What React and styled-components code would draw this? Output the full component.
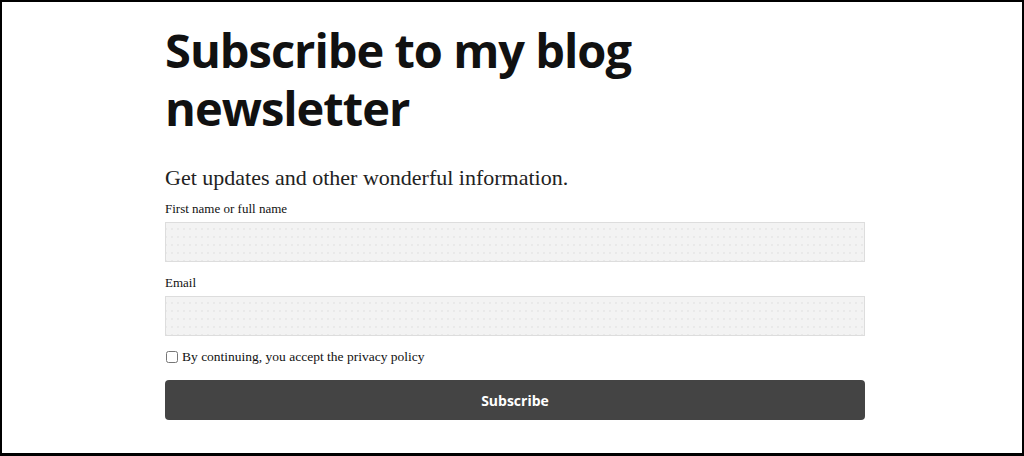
import React from 'react';
import styled, { createGlobalStyle } from 'styled-components';

const GlobalStyle = createGlobalStyle`
  * {
    margin: 0;
    padding: 0;
    box-sizing: border-box;
  }

  html, body {
    background: #fff;
    width: 1024px;
    height: 456px;
    overflow: hidden;
  }
`;

const Frame = styled.div`
  width: 1024px;
  height: 456px;
  border: 2px solid #000;
  border-bottom-width: 3px;
  background: #fff;
  padding: 19px 0 0 163px;
`;

const Form = styled.form`
  width: 700px;
  display: flex;
  flex-direction: column;
`;

const Title = styled.h1`
  font-family: 'Open Sans', 'Noto Sans', sans-serif;
  font-weight: 700;
  font-size: 47px;
  line-height: 58px;
  color: #111;
  letter-spacing: -1px;
  width: 520px;
`;

const Lead = styled.p`
  font-family: 'Liberation Serif', serif;
  font-size: 22px;
  line-height: 26px;
  color: #222;
  margin-top: 28px;
`;

const Label = styled.label`
  display: block;
  font-family: 'Liberation Serif', serif;
  font-size: 13px;
  line-height: 16px;
  color: #111;
  margin-top: ${p => p.$gap || '8px'};
  margin-bottom: 5px;
`;

const Input = styled.input`
  display: block;
  width: 700px;
  height: 40px;
  border: 1px solid #ddd;
  background-color: #f3f3f3;
  background-image: radial-gradient(circle, #dcdcdc 0.6px, transparent 0.8px);
  background-size: 6px 8px;
  background-position: 3px 2px;
  outline: none;
`;

const Consent = styled.label`
  display: flex;
  align-items: center;
  gap: 4px;
  margin-top: 13px;
  font-family: 'Liberation Serif', serif;
  font-size: 13.5px;
  color: #111;
`;

const Check = styled.input`
  width: 12px;
  height: 12px;
  margin: 0 0 0 1px;
  accent-color: #888;
`;

const Button = styled.button`
  margin-top: 15px;
  width: 700px;
  height: 40px;
  border: none;
  border-radius: 4px;
  background: #444;
  color: #fff;
  font-family: 'Open Sans', 'Noto Sans', sans-serif;
  font-weight: 700;
  font-size: 14px;
  cursor: pointer;
`;

export default function App() {
  return (
    <>
      <GlobalStyle />
      <Frame>
        <Form onSubmit={e => e.preventDefault()}>
          <Title>Subscribe to my blog newsletter</Title>
          <Lead>Get updates and other wonderful information.</Lead>
          <Label htmlFor="name" $gap="10px">First name or full name</Label>
          <Input id="name" type="text" />
          <Label htmlFor="email" $gap="13px">Email</Label>
          <Input id="email" type="email" />
          <Consent>
            <Check type="checkbox" />
            By continuing, you accept the privacy policy
          </Consent>
          <Button type="submit">Subscribe</Button>
        </Form>
      </Frame>
    </>
  );
}
